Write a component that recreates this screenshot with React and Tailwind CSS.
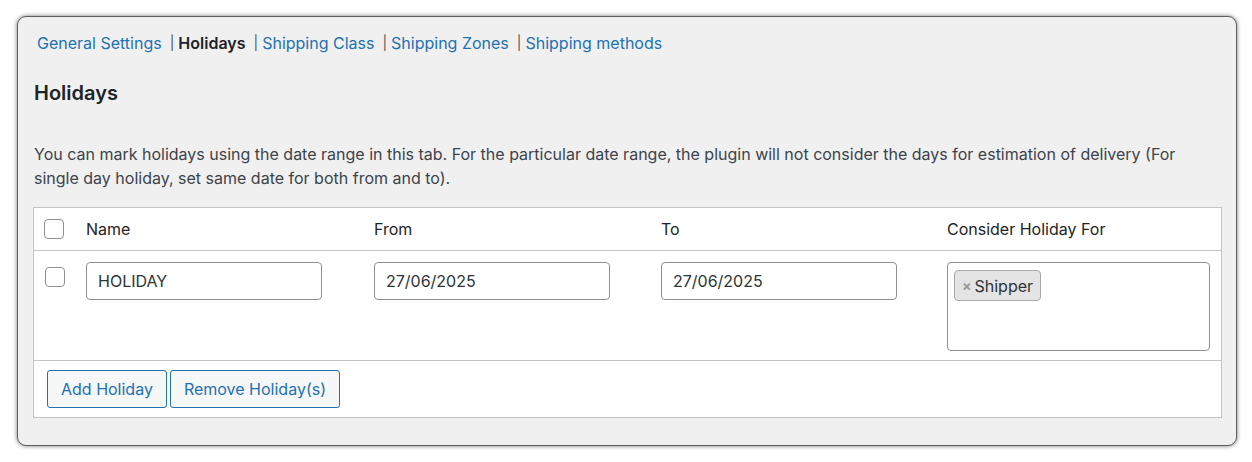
export default function App() {
  const font = { fontFamily: 'Inter, "Liberation Sans", sans-serif' };
  const links = [
    { t: "General Settings", active: false },
    { t: "Holidays", active: true },
    { t: "Shipping Class", active: false },
    { t: "Shipping Zones", active: false },
    { t: "Shipping methods", active: false },
  ];
  return (
    <div className="bg-white w-[1252px] h-[462px] pt-4 pl-[17px]" style={font}>
      <div className="w-[1220px] h-[430px] bg-[#f0f0f1] border border-[#5f5f5f] rounded-[9px] shadow-[0_0_4px_rgba(0,0,0,0.55)] px-[15px] pt-[14px]">
        <ul className="flex items-center pl-[4px] text-[16px] leading-[24px] text-[#3c434a]">
          {links.map((l, i) => (
            <li key={l.t} className="flex items-center">
              <a className={l.active ? "font-semibold text-[#1d2327]" : "text-[#2271b1]"}>{l.t}</a>
              {i < links.length - 1 && <span className="pl-[8px] pr-[4px] text-[14px] text-[#50575e]">|</span>}
            </li>
          ))}
        </ul>
        <h2 className="mt-[24px] text-[20px] leading-[28px] font-semibold text-[#1d2327] pl-[1px]">Holidays</h2>
        <p className="mt-[35px] text-[16px] leading-[24px] text-[#3c434a] pl-[1px]">
          You can mark holidays using the date range in this tab. For the particular date range, the plugin will not consider the days for estimation of delivery (For single day holiday, set same date for both from and to).
        </p>
        <div className="mt-[17px] w-[1189px] bg-white border border-[#c3c4c7]">
          <div className="grid grid-cols-[52px_288px_287px_286px_1fr] h-[43px] items-center border-b border-[#c3c4c7] text-[16px] text-[#1d2327]">
            <div className="pl-[10px]">
              <span className="block w-[20px] h-[20px] rounded-[4px] border border-[#8c8f94] bg-white"></span>
            </div>
            <div>Name</div>
            <div>From</div>
            <div>To</div>
            <div>Consider Holiday For</div>
          </div>
          <div className="grid grid-cols-[52px_288px_287px_286px_1fr] items-start pt-[11px] pb-[9px] border-b border-[#c3c4c7] text-[16px] text-[#2c3338]">
            <div className="pl-[11px] pt-[5px]">
              <span className="block w-[20px] h-[20px] rounded-[4px] border border-[#8c8f94] bg-white"></span>
            </div>
            <div>
              <div className="w-[236px] h-[38px] border border-[#8c8f94] rounded-[4px] bg-white flex items-center pl-[11px]">HOLIDAY</div>
            </div>
            <div>
              <div className="w-[236px] h-[38px] border border-[#8c8f94] rounded-[4px] bg-white flex items-center pl-[11px]">27/06/2025</div>
            </div>
            <div>
              <div className="w-[236px] h-[38px] border border-[#8c8f94] rounded-[4px] bg-white flex items-center pl-[11px]">27/06/2025</div>
            </div>
            <div>
              <div className="w-[263px] h-[89px] border border-[#8c8f94] rounded-[4px] bg-white pl-[6px] pt-[7px]">
                <span className="inline-flex items-center h-[31px] px-[7px] gap-[3px] bg-[#e4e4e4] border border-[#aaaaaa] rounded-[4px] text-[16px] text-[#2c3338]">
                  <span className="text-[#999] font-bold text-[14px]">×</span>
                  <span>Shipper</span>
                </span>
              </div>
            </div>
          </div>
          <div className="flex gap-[3px] pl-[13px] py-[9px]">
            <button className="h-[38px] px-[13px] border border-[#2271b1] rounded-[3px] bg-[#f6f7f7] text-[#2271b1] text-[16px]">Add Holiday</button>
            <button className="h-[38px] px-[13px] border border-[#2271b1] rounded-[3px] bg-[#f6f7f7] text-[#2271b1] text-[16px]">Remove Holiday(s)</button>
          </div>
        </div>
      </div>
    </div>
  );
}
